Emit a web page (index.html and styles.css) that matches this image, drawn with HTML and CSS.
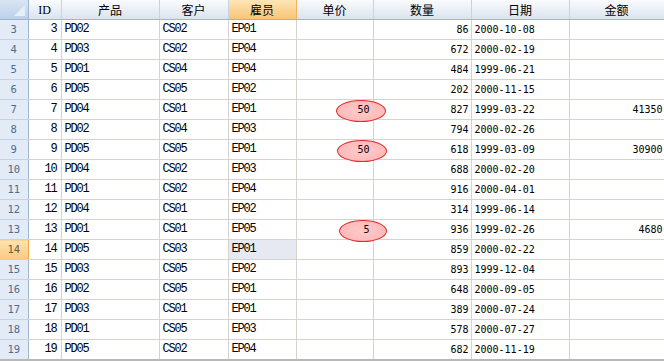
FILE: index.html
```html
<!DOCTYPE html>
<html>
<head>
<meta charset="utf-8">
<link rel="stylesheet" href="styles.css">
</head>
<body>
<table class="grid">
<colgroup>
<col class="c-rh"><col class="c-id"><col class="c-prod"><col class="c-cust"><col class="c-emp"><col class="c-price"><col class="c-qty"><col class="c-date"><col class="c-amt">
</colgroup>
<thead>
<tr>
<th class="corner"><span class="tri"></span></th>
<th class="h-id">ID</th>
<th>产品</th>
<th>客户</th>
<th class="sel">雇员</th>
<th>单价</th>
<th>数量</th>
<th>日期</th>
<th>金额</th>
</tr>
</thead>
<tbody>
<tr><td class="rh">3</td><td class="n">3</td><td class="t">PD02</td><td class="t">CS02</td><td class="t">EP01</td><td class="p"></td><td class="q">86</td><td class="d">2000-10-08</td><td class="q a"></td></tr>
<tr><td class="rh">4</td><td class="n">4</td><td class="t">PD03</td><td class="t">CS02</td><td class="t">EP04</td><td class="p"></td><td class="q">672</td><td class="d">2000-02-19</td><td class="q a"></td></tr>
<tr><td class="rh">5</td><td class="n">5</td><td class="t">PD01</td><td class="t">CS04</td><td class="t">EP04</td><td class="p"></td><td class="q">484</td><td class="d">1999-06-21</td><td class="q a"></td></tr>
<tr><td class="rh">6</td><td class="n">6</td><td class="t">PD05</td><td class="t">CS05</td><td class="t">EP02</td><td class="p"></td><td class="q">202</td><td class="d">2000-11-15</td><td class="q a"></td></tr>
<tr><td class="rh">7</td><td class="n">7</td><td class="t">PD04</td><td class="t">CS01</td><td class="t">EP01</td><td class="p"><span class="oval o1"></span><span class="pv">50</span></td><td class="q">827</td><td class="d">1999-03-22</td><td class="q a">41350</td></tr>
<tr><td class="rh">8</td><td class="n">8</td><td class="t">PD02</td><td class="t">CS04</td><td class="t">EP03</td><td class="p"></td><td class="q">794</td><td class="d">2000-02-26</td><td class="q a"></td></tr>
<tr><td class="rh">9</td><td class="n">9</td><td class="t">PD05</td><td class="t">CS05</td><td class="t">EP01</td><td class="p"><span class="oval o2"></span><span class="pv">50</span></td><td class="q">618</td><td class="d">1999-03-09</td><td class="q a">30900</td></tr>
<tr><td class="rh">10</td><td class="n">10</td><td class="t">PD04</td><td class="t">CS02</td><td class="t">EP03</td><td class="p"></td><td class="q">688</td><td class="d">2000-02-20</td><td class="q a"></td></tr>
<tr><td class="rh">11</td><td class="n">11</td><td class="t">PD01</td><td class="t">CS02</td><td class="t">EP04</td><td class="p"></td><td class="q">916</td><td class="d">2000-04-01</td><td class="q a"></td></tr>
<tr><td class="rh">12</td><td class="n">12</td><td class="t">PD04</td><td class="t">CS01</td><td class="t">EP02</td><td class="p"></td><td class="q">314</td><td class="d">1999-06-14</td><td class="q a"></td></tr>
<tr><td class="rh">13</td><td class="n">13</td><td class="t">PD01</td><td class="t">CS01</td><td class="t">EP05</td><td class="p"><span class="oval o3"></span><span class="pv">5</span></td><td class="q">936</td><td class="d">1999-02-26</td><td class="q a">4680</td></tr>
<tr><td class="rh sel">14</td><td class="n">14</td><td class="t">PD05</td><td class="t">CS03</td><td class="t cur">EP01</td><td class="p"></td><td class="q">859</td><td class="d">2000-02-22</td><td class="q a"></td></tr>
<tr><td class="rh">15</td><td class="n">15</td><td class="t">PD03</td><td class="t">CS05</td><td class="t">EP02</td><td class="p"></td><td class="q">893</td><td class="d">1999-12-04</td><td class="q a"></td></tr>
<tr><td class="rh">16</td><td class="n">16</td><td class="t">PD02</td><td class="t">CS05</td><td class="t">EP01</td><td class="p"></td><td class="q">648</td><td class="d">2000-09-05</td><td class="q a"></td></tr>
<tr><td class="rh">17</td><td class="n">17</td><td class="t">PD03</td><td class="t">CS01</td><td class="t">EP01</td><td class="p"></td><td class="q">389</td><td class="d">2000-07-24</td><td class="q a"></td></tr>
<tr><td class="rh">18</td><td class="n">18</td><td class="t">PD01</td><td class="t">CS05</td><td class="t">EP03</td><td class="p"></td><td class="q">578</td><td class="d">2000-07-27</td><td class="q a"></td></tr>
<tr><td class="rh">19</td><td class="n">19</td><td class="t">PD05</td><td class="t">CS02</td><td class="t">EP04</td><td class="p"></td><td class="q">682</td><td class="d">2000-11-19</td><td class="q a"></td></tr>
</tbody>
</table>
</body>
</html>
```
FILE: styles.css
```css
html, body {
  margin: 0;
  padding: 0;
  background: #ffffff;
  overflow: hidden;
}
body {
  width: 664px;
  height: 361px;
}
.grid {
  table-layout: fixed;
  border-collapse: collapse;
  width: 664px;
  font-family: "Liberation Mono", monospace;
  font-size: 12px;
  color: #000;
  border-bottom: 2px solid #b8b8b8;
}
.c-rh { width: 28px; }
.c-id { width: 33px; }
.c-prod { width: 98px; }
.c-cust { width: 69px; }
.c-emp { width: 68px; }
.c-price { width: 77px; }
.c-qty { width: 98px; }
.c-date { width: 98px; }
.c-amt { width: 95px; }

thead th {
  height: 19px;
  padding: 0;
  font-family: "Noto Sans CJK SC", "Liberation Sans", sans-serif;
  font-weight: normal;
  font-size: 12px;
  line-height: 18px;
  text-align: center;
  background: linear-gradient(#f9fbfd, #e9eef5 55%, #dbe3ee);
  border-right: 1px solid #c5d3e2;
  border-bottom: 1px solid #9eb6ce;
  border-top: 0;
}
thead th.h-id {
  font-family: "Liberation Serif", serif;
  font-size: 12px;
}
thead th.sel {
  background: linear-gradient(#fde6b8, #fbd494 50%, #f8c577);
  border-bottom: 1px solid #f0a44a;
  border-right: 1px solid #f2b35c;
}
thead th.corner {
  position: relative;
  background: linear-gradient(#d9e5f4, #bdd0ea);
  border-right: 1px solid #9eb6ce;
}
.tri {
  position: absolute;
  right: 3px;
  bottom: 3px;
  width: 0;
  height: 0;
  border-left: 11px solid transparent;
  border-bottom: 11px solid #e6eef8;
}

tbody td {
  height: 19px;
  padding: 0 3px;
  line-height: 19px;
  border: 1px solid #d6d3ce;
  white-space: nowrap;
  overflow: visible;
}
tbody td.rh {
  padding: 0;
  text-align: center;
  font-family: "DejaVu Sans Mono", monospace;
  font-size: 10.5px;
  color: #4d6c8f;
  background: #e3ebf6;
  border-left: 0;
  border-right: 1px solid #9eb6ce;
  border-bottom: 1px solid #c4d2e2;
}
tbody td.rh.sel {
  background: linear-gradient(#fde3b0, #f9c97e);
  color: #6d5a3a;
  border-right: 1px solid #f0a44a;
}
td.n {
  text-align: right;
  letter-spacing: -1.2px;
  padding-right: 4px;
}
td.t {
  text-align: left;
  letter-spacing: -1.2px;
}
td.cur {
  background: #e6e9f2;
}
td.p {
  position: relative;
  text-align: right;
  font-family: "DejaVu Sans Mono", monospace;
  font-size: 10px;
}
td.q {
  text-align: right;
  font-family: "DejaVu Sans Mono", monospace;
  font-size: 10px;
  padding-right: 2px;
}
td.a {
  padding-right: 1px;
}
td.d {
  text-align: left;
  font-family: "DejaVu Sans Mono", monospace;
  font-size: 10px;
}
.pv {
  position: relative;
  z-index: 1;
}
.oval {
  position: absolute;
  top: 0;
  height: 22px;
  box-sizing: border-box;
  border: 1px solid #df2b2b;
  border-radius: 50%;
  background: radial-gradient(ellipse at center, #ffcaca, #ffb4b4);
}
.o1 { left: 39px; width: 50px; }
.o2 { left: 40px; width: 50px; }
.o3 { left: 42px; width: 48px; }
```
